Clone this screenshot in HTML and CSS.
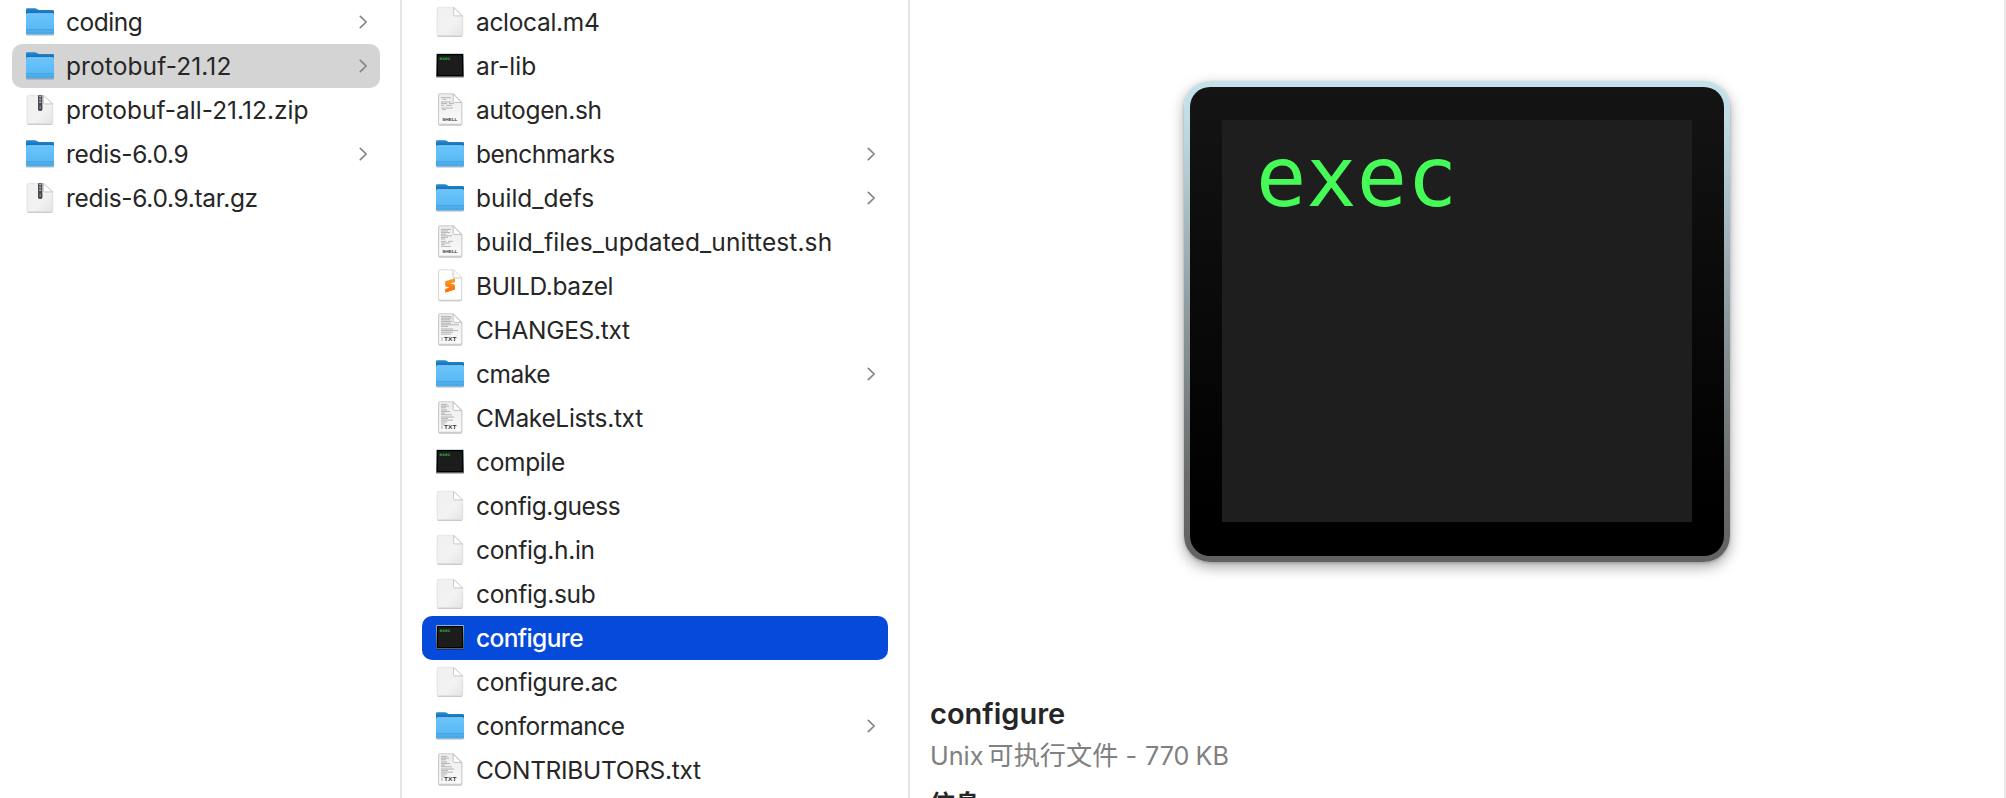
FILE: index.html
```
<!DOCTYPE html>
<html lang="zh-CN">
<head>
<meta charset="utf-8">
<title>configure</title>
<link rel="stylesheet" href="styles.css">
</head>
<body>
<svg class="defs" aria-hidden="true">
  <defs>
    <linearGradient id="folder-front" x1="0" y1="0" x2="0" y2="1"><stop offset="0" stop-color="#6cc5fb"/><stop offset=".72" stop-color="#59b9f4"/><stop offset="1" stop-color="#4caae6"/></linearGradient>
    <linearGradient id="folder-back" x1="0" y1="0" x2="0" y2="1"><stop offset="0" stop-color="#2a8bd0"/><stop offset=".25" stop-color="#1873ba"/><stop offset="1" stop-color="#1873ba"/></linearGradient>
    <linearGradient id="paper" x1="0" y1="0" x2="1" y2="1"><stop offset="0" stop-color="#f0f0f0"/><stop offset=".6" stop-color="#f2f2f2"/><stop offset="1" stop-color="#e4e4e4"/></linearGradient>
    <linearGradient id="doc" x1="0" y1="0" x2="0" y2="1"><stop offset="0" stop-color="#ededed"/><stop offset="1" stop-color="#fafafa"/></linearGradient>
    <linearGradient id="frame" x1="0" y1="0" x2="0" y2="1"><stop offset="0" stop-color="#b9d5de"/><stop offset="1" stop-color="#5c5c5c"/></linearGradient>
    <linearGradient id="flame" x1="0" y1="0" x2="0" y2="1"><stop offset="0" stop-color="#ff9d1c"/><stop offset="1" stop-color="#f76a0c"/></linearGradient>
    <filter id="soft" x="-20%" y="-20%" width="140%" height="150%"><feDropShadow dx="0" dy=".8" stdDeviation=".6" flood-color="#000" flood-opacity=".35"/></filter>
  </defs>
  <symbol id="folder" viewBox="0 0 32 32">
    <g filter="url(#soft)">
      <path d="M2 3.4Q2 2.2 3.2 2.2H10.8Q12 2.2 13 3.1T15.2 4.1H28.8Q30 4.1 30 5.3V20H2Z" fill="url(#folder-back)"/>
      <path d="M2 9Q2 7.4 3.6 7.4H28.4Q30 7.4 30 9V27.2Q30 28.4 28.8 28.4H3.2Q2 28.4 2 27.2Z" fill="url(#folder-front)"/>
      <path d="M2.3 8.2Q2.6 7.6 3.6 7.6H28.4Q29.4 7.6 29.7 8.2" stroke="#8ad4ff" stroke-width=".7" fill="none"/>
      <path d="M2 23.8H30" stroke="#3b98d6" stroke-width=".8"/>
      <path d="M2 26.2H30" stroke="#409bd6" stroke-width=".5"/>
    </g>
  </symbol>
  <symbol id="file" viewBox="0 0 32 32">
    <g filter="url(#soft)">
      <path d="M3.2 2.8Q3.2 1.3 4.7 1.3H19.8L28.7 10V28Q28.7 29.5 27.2 29.5H4.7Q3.2 29.5 3.2 28Z" fill="url(#paper)" stroke="#dedede" stroke-width=".5"/>
      <path d="M19.6 1.5V8.7Q19.6 9.9 20.8 9.9H28.5Z" fill="#fff" stroke="#b5b5b5" stroke-width=".7"/>
    </g>
  </symbol>
  <symbol id="zip" viewBox="0 0 32 32">
    <use href="#file"/>
    <path d="M14 1.2H18.4V15.4Q18.4 17.1 16.2 17.1T14 15.4Z" fill="#45494f"/>
    <path d="M16.2 2V10" stroke="#aeb4bb" stroke-width="2" stroke-dasharray="1.5 1.2"/>
    <path d="M16.2 11.5V15" stroke="#7b8188" stroke-width="1.4"/>
  </symbol>
  <symbol id="doc-base" viewBox="0 0 32 32">
    <g filter="url(#soft)">
      <path d="M4.6 .6Q4.6 -.2 5.4 -.2H19.2L27.8 8.4V29.3Q27.8 30.2 27 30.2H5.4Q4.6 30.2 4.6 29.3Z" fill="url(#doc)" stroke="#bdbdbd" stroke-width=".7"/>
      <path d="M19.2 0V7.4Q19.2 8.4 20.2 8.4H27.6Z" fill="#fff" stroke="#a9a9a9" stroke-width=".7"/>
    </g>
  </symbol>
  <symbol id="shell" viewBox="0 0 32 32">
    <use href="#doc-base"/>
    <path d="M7 3.7H17M9 5.4H12M7 8H17.5M7 9.6H13M15 9.6H20M7 11.4H10M12 11.4H18M7 14H19M8 15.6H12" stroke="#a6a6a6" stroke-width=".8"/>
    <text class="tag tag-shell" x="8.2" y="26.6" textLength="15.2" lengthAdjust="spacingAndGlyphs">SHELL</text>
  </symbol>
  <symbol id="shell-long" viewBox="0 0 32 32">
    <use href="#doc-base"/>
    <path d="M7 3.4H17M7 5H14M7 6.6H16M7 8.2H12M7 9.8H18M7 11.4H14M7 13H11M7 15.4H12M14 15.4H19M7 17H16M7 18.6H11M7 20.4H17" stroke="#a6a6a6" stroke-width=".8"/>
    <text class="tag tag-shell" x="8.2" y="26.6" textLength="15.2" lengthAdjust="spacingAndGlyphs">SHELL</text>
  </symbol>
  <symbol id="txt" viewBox="0 0 32 32">
    <use href="#doc-base"/>
    <path d="M7 2.6H17M7 4.2H18M7 5.8H16M7 7.4H18M7 9.2H17M7 10.8H25M7 12.4H14M7 15H19M7 16.6H24M7 18.2H19M7 20H17M7 24H9M7 26H9" stroke="#a0a0a0" stroke-width=".8"/>
    <text class="tag tag-txt" x="10" y="26.5" textLength="12.4" lengthAdjust="spacingAndGlyphs">TXT</text>
  </symbol>
  <symbol id="txt-list" viewBox="0 0 32 32">
    <use href="#doc-base"/>
    <path d="M7 2.6H13M7 4.2H15M7 5.8H12M7 8H13M7 9.6H16M7 11.2H11M7 12.8H18M7 15H20M7 16.6H14M7 18.2H19M7 20H13M7 22H11M7 24H9M7 26H9" stroke="#a0a0a0" stroke-width=".8"/>
    <text class="tag tag-txt" x="10" y="26.5" textLength="12.4" lengthAdjust="spacingAndGlyphs">TXT</text>
  </symbol>
  <symbol id="sublime" viewBox="0 0 32 32">
    <g filter="url(#soft)">
      <path d="M4.6 1.3Q4.6 -.2 6 -.2H18.6Q20 -.2 21 .8L26.6 6.2Q27.6 7.3 27.6 8.6V28.6Q27.6 30 26.2 30H6Q4.6 30 4.6 28.6Z" fill="#fff" stroke="#c6c6c6" stroke-width=".6"/>
      <path d="M18.6 0Q19 1 19 3V6.6Q19 8 20.4 8H24.5Q27 8 27.5 9" fill="#f8f8f8" stroke="#b5b5b5" stroke-width=".7"/>
    </g>
    <path d="M11.2 11.2 21 8.2V12L16.6 13.4 20.2 14.6Q21.2 15 21 16.2V19.6L11.2 22.7V19L15.4 17.6 12 16.5Q11 16 11.2 15Z" fill="url(#flame)"/>
  </symbol>
  <symbol id="exec" viewBox="0 0 32 32">
    <g filter="url(#soft)">
      <rect x="2" y="3.2" width="28" height="23.8" rx=".9" fill="url(#frame)"/>
      <rect x="2.8" y="4" width="26.4" height="22" rx=".4" fill="#050505"/>
      <rect x="4" y="5.2" width="24" height="19.8" fill="#1e1e1e"/>
    </g>
    <text class="tag-exec" x="5.6" y="9.8" textLength="11" lengthAdjust="spacingAndGlyphs">exec</text>
  </symbol>
  <symbol id="chevron" viewBox="0 0 9 14">
    <path d="M1.3 1.3 7.2 7 1.3 12.7" fill="none" stroke="#858585" stroke-width="1.7" stroke-linecap="round" stroke-linejoin="round"/>
  </symbol>
</svg>

<main class="browser">
  <ul class="column column-parent">
    <li class="row"><svg class="icon"><use href="#folder"/></svg><span class="name tight">coding</span><svg class="chevron"><use href="#chevron"/></svg></li>
    <li class="row row-open"><svg class="icon"><use href="#folder"/></svg><span class="name loose">protobuf-21.12</span><svg class="chevron"><use href="#chevron"/></svg></li>
    <li class="row"><svg class="icon"><use href="#zip"/></svg><span class="name even">protobuf-all-21.12.zip</span></li>
    <li class="row"><svg class="icon"><use href="#folder"/></svg><span class="name">redis-6.0.9</span><svg class="chevron"><use href="#chevron"/></svg></li>
    <li class="row"><svg class="icon"><use href="#zip"/></svg><span class="name">redis-6.0.9.tar.gz</span></li>
  </ul>
  <ul class="column column-files">
    <li class="row"><svg class="icon"><use href="#file"/></svg><span class="name">aclocal.m4</span></li>
    <li class="row"><svg class="icon"><use href="#exec"/></svg><span class="name even">ar-lib</span></li>
    <li class="row"><svg class="icon"><use href="#shell"/></svg><span class="name">autogen.sh</span></li>
    <li class="row"><svg class="icon"><use href="#folder"/></svg><span class="name tight">benchmarks</span><svg class="chevron"><use href="#chevron"/></svg></li>
    <li class="row"><svg class="icon"><use href="#folder"/></svg><span class="name even">build_defs</span><svg class="chevron"><use href="#chevron"/></svg></li>
    <li class="row"><svg class="icon"><use href="#shell-long"/></svg><span class="name loose">build_files_updated_unittest.sh</span></li>
    <li class="row"><svg class="icon"><use href="#sublime"/></svg><span class="name">BUILD.bazel</span></li>
    <li class="row"><svg class="icon"><use href="#txt"/></svg><span class="name">CHANGES.txt</span></li>
    <li class="row"><svg class="icon"><use href="#folder"/></svg><span class="name tight">cmake</span><svg class="chevron"><use href="#chevron"/></svg></li>
    <li class="row"><svg class="icon"><use href="#txt-list"/></svg><span class="name">CMakeLists.txt</span></li>
    <li class="row"><svg class="icon"><use href="#exec"/></svg><span class="name">compile</span></li>
    <li class="row"><svg class="icon"><use href="#file"/></svg><span class="name tight">config.guess</span></li>
    <li class="row"><svg class="icon"><use href="#file"/></svg><span class="name">config.h.in</span></li>
    <li class="row"><svg class="icon"><use href="#file"/></svg><span class="name">config.sub</span></li>
    <li class="row row-selected"><svg class="icon"><use href="#exec"/></svg><span class="name">configure</span></li>
    <li class="row"><svg class="icon"><use href="#file"/></svg><span class="name">configure.ac</span></li>
    <li class="row"><svg class="icon"><use href="#folder"/></svg><span class="name tight">conformance</span><svg class="chevron"><use href="#chevron"/></svg></li>
    <li class="row"><svg class="icon"><use href="#txt-list"/></svg><span class="name">CONTRIBUTORS.txt</span></li>
  </ul>
  <section class="preview">
    <div class="terminal"><div class="bezel"><div class="screen">exec</div></div></div>
    <div class="details">
      <h1 class="title">configure</h1>
      <p class="kind"><span class="unix">Unix</span><span class="type">可执行文件</span><span class="dash">-</span><span class="size">770</span><span class="unit">KB</span></p>
      <h2 class="heading">信息</h2>
    </div>
  </section>
</main>
</body>
</html>
```

FILE: styles.css
```
* { box-sizing: border-box; margin: 0; padding: 0; }
body {
  width: 2006px;
  height: 798px;
  overflow: hidden;
  background: #fff;
  color: #262626;
  font-family: Inter, "Noto Sans CJK SC", sans-serif;
}
.defs { display: block; width: 0; height: 0; }
.browser { display: flex; height: 798px; }
.column { flex: none; list-style: none; border-right: 2px solid #e5e5e5; }
.column-parent { width: 402px; padding: 0 20px 0 12px; }
.column-files { width: 508px; padding: 0 20px; }
.row {
  display: flex;
  align-items: center;
  height: 44px;
  padding: 0 12px;
  border-radius: 10px;
}
.row-open { background: #d4d4d4; }
.row-selected { background: #064adb; color: #fff; font-weight: 500; }
.icon { flex: none; width: 32px; height: 32px; overflow: visible; }
.icon use, symbol { overflow: visible; }
.name {
  flex: 1;
  margin-left: 10px;
  font-size: 24.5px;
  line-height: 44px;
  letter-spacing: -.32px;
  white-space: nowrap;
}
.tight { letter-spacing: -.48px; }
.even { letter-spacing: 0; }
.loose { letter-spacing: .1px; }
.row-selected .name { letter-spacing: -.62px; }
.chevron { flex: none; width: 9px; height: 14px; margin-top: -1px; }
.tag { font-family: "Liberation Sans", sans-serif; font-weight: 700; fill: #3a3a3a; }
.tag-shell { font-size: 4.4px; }
.tag-txt { font-size: 5.8px; }
.tag-exec { font-family: "DejaVu Sans Mono", monospace; font-size: 4.6px; font-weight: 700; fill: #2fae3e; }

.preview { flex: 1; padding-top: 81px; border-right: 2px solid #e8e8e8; }
.terminal {
  width: 546px;
  height: 481px;
  margin-left: 274px;
  padding: 6px;
  border-radius: 26px;
  background: linear-gradient(#c5e1e9 0, #c0dce4 8%, #8b989c 50%, #6a6c6c 82%, #646261 100%);
  box-shadow: 0 5px 14px rgba(0, 0, 0, .34), 0 1px 3px rgba(0, 0, 0, .2);
}
.bezel {
  height: 469px;
  padding: 33px 32px;
  border-radius: 20px;
  background: linear-gradient(#141414, #000 90%);
}
.screen {
  height: 402px;
  padding-left: 34px;
  background: #1e1e1e;
  color: #46fb57;
  font: 83.6px/114px "DejaVu Sans Mono", monospace;
}
.details { padding: 132px 0 0 20px; }
.title { font-size: 29px; font-weight: 600; line-height: 40px; }
.kind { display: flex; align-items: baseline; height: 42px; color: #808080; font-size: 25.2px; line-height: 40px; }
.type { margin-left: 4px; font: 26.2px/40px "Noto Sans CJK SC", sans-serif; }
.dash { margin-left: 7px; }
.size { margin-left: 8px; }
.unit { margin-left: 6px; }
.heading { font: 700 25px/36px "Noto Sans CJK SC", sans-serif; margin-top: 8px; }
```
